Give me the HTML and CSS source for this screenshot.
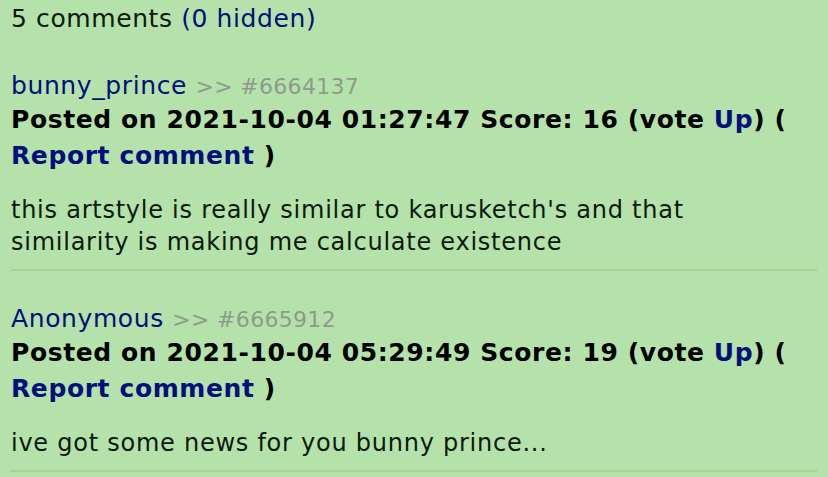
FILE: index.html
```html
<!DOCTYPE html>
<html lang="en">
<head>
  <meta charset="UTF-8" />
  <title>Comments</title>
  <link rel="stylesheet" href="styles.css">
</head>
<body>
  <div class="comments">
    <p class="count">5 comments <a href="#">(0 hidden)</a></p>

    <!-- comment 1 -->
    <div class="comment">
      <div class="head">
        <a class="user" href="#">bunny_prince</a>
        <span class="ref">&gt;&gt; #6664137</span>
      </div>
      <div class="meta">
        Posted on 2021-10-04 01:27:47 Score: 16 (vote <a href="#">Up</a>) ( <a href="#">Report comment</a> )
      </div>
      <p class="text">this artstyle is really similar to karusketch's and that similarity is making me calculate existence</p>
    </div>

    <!-- comment 2 -->
    <div class="comment">
      <div class="head">
        <a class="user" href="#">Anonymous</a>
        <span class="ref">&gt;&gt; #6665912</span>
      </div>
      <div class="meta">
        Posted on 2021-10-04 05:29:49 Score: 19 (vote <a href="#">Up</a>) ( <a href="#">Report comment</a> )
      </div>
      <p class="text">ive got some news for you bunny prince...</p>
    </div>
  </div>
</body>
</html>
```
FILE: styles.css
```css
* {
  box-sizing: border-box;
}

body {
  margin: 0;
  background: #b5e2aa;
  color: #0b1a0b;
  font-family: "DejaVu Sans", Verdana, sans-serif;
  font-size: 25px;
  letter-spacing: 0.6px;
}

a {
  color: #00107a;
  text-decoration: none;
}

.comments {
  width: 817px;
  padding: 0 0 0 11px;
}

.count {
  margin: 0;
  padding: 3px 0 3px;
  line-height: 32px;
}

.comment {
  padding-top: 33px;
  padding-bottom: 11px;
  border-bottom: 2px solid #a4d39a;
}

.head {
  line-height: 30px;
}

.ref {
  color: #8e9a8c;
  font-size: 22px;
  letter-spacing: 0.3px;
}

.meta {
  font-weight: bold;
  color: #000;
  line-height: 36px;
}

.meta a {
  color: #00107a;
}

.text {
  max-width: 760px;
  margin: 20px 0 0;
  font-size: 24px;
  letter-spacing: 0.75px;
  line-height: 32px;
}
```
